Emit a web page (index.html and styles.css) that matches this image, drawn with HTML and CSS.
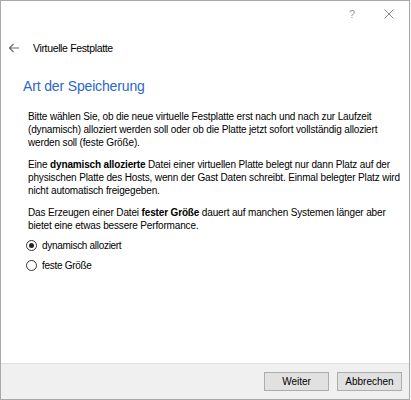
FILE: index.html
```html
<!DOCTYPE html>
<html lang="de">
<head>
<meta charset="utf-8">
<link rel="stylesheet" href="styles.css">
</head>
<body>
<div class="window">
  <div class="titlebar">
    <span class="help">?</span>
    <svg class="close" width="10" height="10" viewBox="0 0 10 10"><path d="M0.5 0.5 L9.5 9.5 M9.5 0.5 L0.5 9.5" stroke="#8a8a8a" stroke-width="1" fill="none"/></svg>
  </div>
  <div class="nav">
    <svg class="back" width="12" height="10" viewBox="0 0 12 10"><path d="M11 5 H1.5 M5.5 1 L1.5 5 L5.5 9" stroke="#6a6a6a" stroke-width="1.2" fill="none"/></svg>
    <span class="title">Virtuelle Festplatte</span>
  </div>
  <div class="content">
    <h1 class="heading">Art der Speicherung</h1>
    <p class="para">Bitte wählen Sie, ob die neue virtuelle Festplatte erst nach und nach zur Laufzeit<br>(dynamisch) alloziert werden soll oder ob die Platte jetzt sofort vollständig alloziert<br>werden soll (feste Größe).</p>
    <p class="para">Eine <b>dynamisch allozierte</b> Datei einer virtuellen Platte belegt nur dann Platz auf der<br>physischen Platte des Hosts, wenn der Gast Daten schreibt. Einmal belegter Platz wird<br>nicht automatisch freigegeben.</p>
    <p class="para">Das Erzeugen einer Datei <b>fester Größe</b> dauert auf manchen Systemen länger aber<br>bietet eine etwas bessere Performance.</p>
    <div class="radios">
      <label class="radio"><span class="dot checked"></span>dynamisch alloziert</label>
      <label class="radio"><span class="dot"></span>feste Größe</label>
    </div>
  </div>
  <div class="footer">
    <button class="btn">Weiter</button>
    <button class="btn">Abbrechen</button>
  </div>
</div>
</body>
</html>
```
FILE: styles.css
```css
html, body {
  margin: 0;
  padding: 0;
}
body {
  background: #f7f7f7;
  width: 411px;
  height: 400px;
  font-family: "Liberation Sans", Arial, sans-serif;
  color: #000;
}
.window {
  width: 410px;
  height: 400px;
  box-sizing: border-box;
  border: 1px solid #a9a9a9;
  background: #fff;
  display: flex;
  flex-direction: column;
}
.titlebar {
  height: 25px;
  display: flex;
  align-items: center;
  justify-content: flex-end;
  padding-right: 15px;
  gap: 29px;
}
.help {
  font-size: 11px;
  color: #9a9a9a;
}
.close {
  display: block;
}
.nav {
  height: 44px;
  display: flex;
  align-items: center;
  padding-left: 7px;
}
.back {
  display: block;
}
.title {
  margin-left: 13px;
  font-size: 10.5px;
  letter-spacing: -0.35px;
}
.content {
  padding-left: 22px;
  flex: 1;
}
.heading {
  margin: 7px 0 14.5px 0;
  font-size: 14px;
  font-weight: normal;
  color: #2b67c9;
  line-height: 18px;
  letter-spacing: -0.15px;
}
.para {
  margin: 0 0 0 5px;
  font-size: 10px;
  letter-spacing: -0.15px;
  line-height: 13px;
  white-space: nowrap;
}
.para + .para {
  margin-top: 9px;
}
.radios {
  margin-left: 3px;
  margin-top: 7px;
  display: flex;
  flex-direction: column;
  gap: 7px;
}
.radio {
  display: flex;
  align-items: center;
  font-size: 10px;
  letter-spacing: -0.3px;
  height: 13px;
}
.dot {
  width: 11px;
  height: 11px;
  box-sizing: border-box;
  border: 1px solid #333;
  border-radius: 50%;
  margin-right: 5px;
  position: relative;
  background: #fff;
}
.dot.checked::after {
  content: "";
  position: absolute;
  left: 2px;
  top: 2px;
  width: 5px;
  height: 5px;
  border-radius: 50%;
  background: #222;
}
.footer {
  height: 35px;
  border-top: 1px solid #dfdfdf;
  background: #f0f0f0;
  display: flex;
  align-items: center;
  justify-content: flex-end;
  gap: 8px;
  padding-right: 7px;
}
.btn {
  width: 65px;
  height: 19px;
  border: 1px solid #adadad;
  background: #e1e1e1;
  font-family: "Liberation Sans", Arial, sans-serif;
  font-size: 10px;
  color: #000;
  padding: 0;
  margin: 0;
}
```
